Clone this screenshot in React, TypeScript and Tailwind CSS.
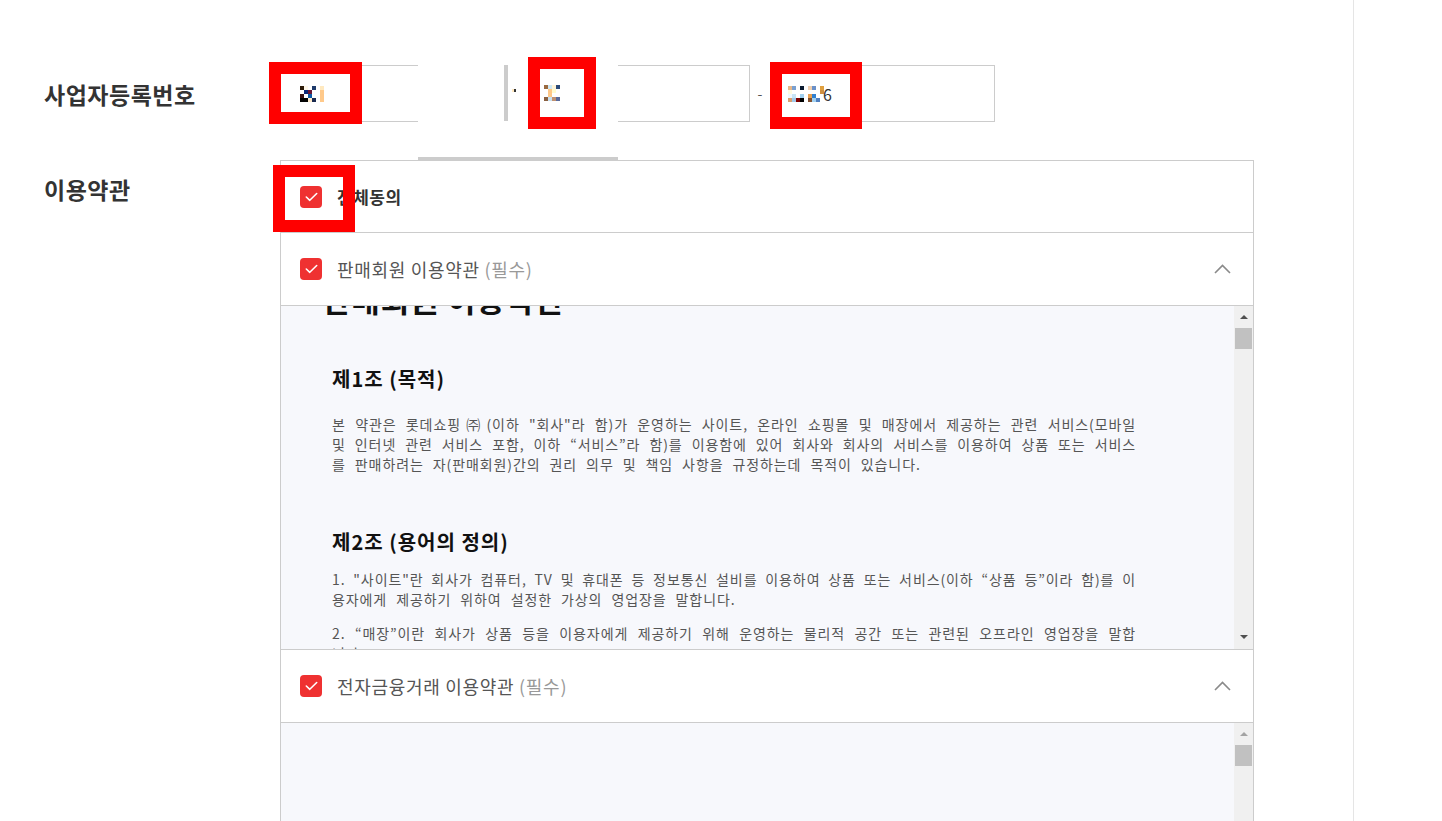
import type { ReactNode } from "react";

const mosaicA = [
  ["#2b1a08", "#fff8ea", "#ffffff", "#1e3a6b", "#ffffff", "#ffe9c0"],
  ["#ffffff", "#0c2a7a", "#6b1836", "#ffffff", "#ffffff", "#ffc98a"],
  ["#3a1414", "#ffffff", "#0d5aa8", "#ffffff", "#ffffff", "#ffc98a"],
  ["#050505", "#050505", "#ffeccc", "#1a2a50", "#ffffff", "#ffc98a"],
];

const mosaicB = [
  ["#9a6a40", "#cfe8f4", "#fff4d8", "#2a4a7a"],
  ["#ffffff", "#ffc888", "#fffbd0", "#ffffff"],
  ["#ffffff", "#ffc888", "#ffffff", "#ffffff"],
  ["#8a6040", "#c8e0f0", "#c09070", "#5a6a9a"],
];

const mosaicC = [
  ["#e8b888", "#7aa0d0", "#ffffff", "#0a1a30", "#ffffff", "#f0d0b0", "#6a90c8", "#ffffff", "#e0a040"],
  ["#fffbe0", "#ffffff", "#ffffff", "#ffffff", "#ffffff", "#ffffff", "#ffffff", "#ffffff", "#d09040"],
  ["#f0f8ff", "#c8e4f4", "#ffffff", "#a0d0f0", "#ffffff", "#e8a050", "#3080d0", "#ffffff", "#ffffff"],
  ["#d8a070", "#a0c8e8", "#800000", "#000000", "#ffffff", "#805030", "#a0d0f0", "#5080c0", "#ffffff"],
];

// pixelated (redacted) input value
const Mosaic = ({ cells }: { cells: string[][] }) => (
  <svg width={cells[0].length * 4} height={cells.length * 4} className="block shrink-0">
    {cells.map((row, r) =>
      row.map((c, i) => <rect key={`${r}-${i}`} x={i * 4} y={r * 4} width="4" height="4" fill={c} />)
    )}
  </svg>
);

const Check = () => (
  <span className="flex h-[22px] w-[22px] shrink-0 items-center justify-center rounded-[4px] bg-[#ef3131]">
    <svg width="13" height="10" viewBox="0 0 13 10" fill="none">
      <path d="M1.3 5 L4.8 8.3 L11.7 1.5" stroke="#fff" strokeWidth="1.6" strokeLinecap="round" strokeLinejoin="round" />
    </svg>
  </span>
);

const ChevronUp = () => (
  <svg width="17" height="10" viewBox="0 0 17 10" fill="none" className="ml-auto mr-[22px]">
    <path d="M1 9 L8.5 1.5 L16 9" stroke="#8a8a8a" strokeWidth="1.6" />
  </svg>
);

const Scrollbar = ({ dim }: { dim?: boolean }) => (
  <div className="flex h-full w-[19px] shrink-0 flex-col bg-[#f0f0f0]">
    <div className="flex h-[17px] justify-center pt-[9px]">
      <span
        className={`h-0 w-0 border-x-[4px] border-b-[4px] border-x-transparent ${
          dim ? "border-b-[#a3a3a3]" : "border-b-[#505050]"
        }`}
      />
    </div>
    <div className="flex-1">
      <div className="ml-[1px] mt-[5px] h-[21px] w-[17px] bg-[#c1c1c1]" />
    </div>
    <div className="flex h-[17px] justify-center pt-[3px]">
      <span className="h-0 w-0 border-x-[4px] border-t-[4px] border-x-transparent border-t-[#505050]" />
    </div>
  </div>
);

const Line = ({ children, last }: { children: ReactNode; last?: boolean }) =>
  last ? (
    <p className="whitespace-nowrap tracking-[0.9px] [word-spacing:5px]">{children}</p>
  ) : (
    <p className="text-justify tracking-[0.9px] [text-align-last:justify]">{children}</p>
  );

const AgreeRow = ({ title }: { title: string }) => (
  <div className="flex h-[73px] items-center gap-[15px] border-b border-[#cccccc] pl-[19px]">
    <Check />
    <span className="text-[18px] tracking-[0.7px] text-[#555]">
      {title} <span className="text-[#999]">(필수)</span>
    </span>
    <ChevronUp />
  </div>
);

const App = () => {
  return (
    <div className="relative h-[821px] w-[1442px] overflow-hidden bg-white font-['Noto_Sans_CJK_KR','Noto_Sans',sans-serif] text-[#333]">
      <div className="flex h-full w-[1354px] flex-col border-r border-[#e5e5e5] pt-[65px]">
        {/* business number */}
        <div className="flex items-center">
          <div className="w-[280px] pl-[44px] text-[23px] font-semibold leading-[30px] tracking-[0.5px]">사업자등록번호</div>
          <div className="flex items-center">
            <div className="flex h-[57px] w-[225px] items-center border border-[#cccccc] pl-[19px]">
              <Mosaic cells={mosaicA} />
            </div>
            <span className="w-[20px] text-center text-[14px] text-[#555]">-</span>
            <div className="h-[57px] w-[225px] border border-[#cccccc]" />
            <span className="w-[20px] text-center text-[14px] text-[#555]">-</span>
            <div className="flex h-[57px] w-[225px] items-center border border-[#cccccc] pl-[17px] text-[16px] text-[#333]">
              <Mosaic cells={mosaicC} />
              <span className="-ml-[1px]">6</span>
            </div>
          </div>
        </div>

        {/* terms */}
        <div className="mt-[38px] flex">
          <div className="w-[280px] pl-[44px] pt-[14px] text-[23px] font-semibold leading-[30px] tracking-[0.5px]">이용약관</div>
          <div className="w-[974px] border-x border-t border-[#cccccc]">
            <div className="flex h-[72px] items-center gap-[15px] border-b border-[#cccccc] pl-[19px]">
              <Check />
              <span className="text-[17px] font-bold tracking-[0.5px] text-[#333]">전체동의</span>
            </div>

            <AgreeRow title="판매회원 이용약관" />

            <div className="flex h-[343px] bg-[#f7f8fc]">
              <div className="flex-1 overflow-hidden pl-[51px] text-[14px] leading-[20px] text-[#555]">
                <div className="-ml-[10px] -mt-[25px] text-[31px] font-bold leading-[36px] tracking-[0.8px] text-[#111]">
                  판매회원 이용약관
                </div>
                <h3 className="mt-[49px] text-[20px] font-bold leading-[26px] tracking-[1px] text-[#111]">제1조 (목적)</h3>
                <div className="mt-[22px] w-[804px]">
                  <Line>
                    본 약관은 롯데쇼핑㈜(이하 "회사"라 함)가 운영하는 사이트, 온라인 쇼핑몰 및 매장에서 제공하는 관련 서비스(모바일
                  </Line>
                  <Line>
                    및 인터넷 관련 서비스 포함, 이하 “서비스”라 함)를 이용함에 있어 회사와 회사의 서비스를 이용하여 상품 또는 서비스
                  </Line>
                  <Line last>를 판매하려는 자(판매회원)간의 권리 의무 및 책임 사항을 규정하는데 목적이 있습니다.</Line>
                </div>
                <h3 className="mt-[55px] text-[20px] font-bold leading-[26px] tracking-[1px] text-[#111]">제2조 (용어의 정의)</h3>
                <div className="mt-[14px] w-[804px]">
                  <Line>
                    1. "사이트"란 회사가 컴퓨터, TV 및 휴대폰 등 정보통신 설비를 이용하여 상품 또는 서비스(이하 “상품 등”이라 함)를 이
                  </Line>
                  <Line last>용자에게 제공하기 위하여 설정한 가상의 영업장을 말합니다.</Line>
                </div>
                <div className="mt-[14px] w-[804px]">
                  <Line>
                    2. “매장”이란 회사가 상품 등을 이용자에게 제공하기 위해 운영하는 물리적 공간 또는 관련된 오프라인 영업장을 말합
                  </Line>
                  <Line last>니다.</Line>
                </div>
              </div>
              <Scrollbar />
            </div>

            <div className="border-t border-[#cccccc]">
              <AgreeRow title="전자금융거래 이용약관" />
            </div>

            <div className="flex h-[120px] bg-[#f7f8fc]">
              <div className="flex-1" />
              <Scrollbar dim />
            </div>
          </div>
        </div>
      </div>

      {/* popup covering the middle field */}
      <div className="absolute left-[418px] top-[60px] h-[100px] w-[200px] border-b-[3px] border-[#cccccc] bg-white">
        <div className="absolute left-[86px] top-[5px] h-[56px] w-[4px] bg-[#cccccc]" />
        <div className="absolute left-[94px] top-[29px] flex">
          <span className="h-[3px] w-[2px] bg-[#ffe8c0]" />
          <span className="h-[3px] w-[2px] bg-[#333]" />
        </div>
        <div className="absolute left-[126px] top-[25px]">
          <Mosaic cells={mosaicB} />
        </div>
      </div>

      {/* redaction boxes */}
      <div className="absolute left-[269px] top-[62px] h-[62px] w-[93px] border-[12px] border-[#ff0000]" />
      <div className="absolute left-[528px] top-[57px] h-[72px] w-[68px] border-[12px] border-[#ff0000]" />
      <div className="absolute left-[770px] top-[62px] h-[67px] w-[92px] border-[12px] border-[#ff0000]" />
      <div className="absolute left-[273px] top-[165px] h-[67px] w-[82px] border-[12px] border-[#ff0000]" />
    </div>
  );
};

export default App;
